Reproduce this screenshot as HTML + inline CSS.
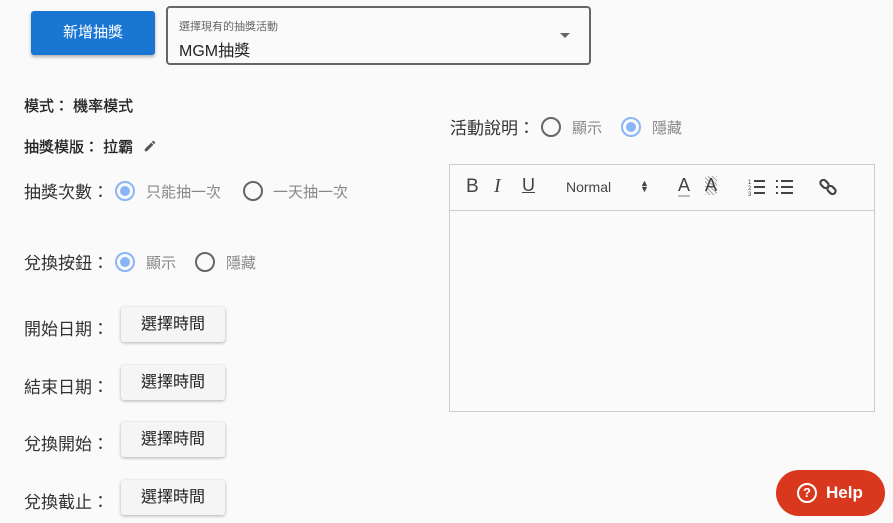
<!DOCTYPE html><html><head><meta charset="utf-8"><style>
body{margin:0;width:893px;height:523px;background:#fafafa;font-family:"Liberation Sans","Noto Sans CJK TC",sans-serif;position:relative;overflow:hidden;color:#222}
.a{position:absolute;white-space:nowrap}
.btn{position:absolute;left:121px;width:104px;height:35px;background:#f5f5f5;border-radius:3px;box-shadow:0 1px 3px rgba(0,0,0,.3);font-size:16px;line-height:35px;text-align:center;color:#222}
.lab{font-size:17px;color:#333}
.r{position:absolute;width:20px;height:20px;border:2px solid #666;border-radius:50%;box-sizing:border-box}
.r.on{border-color:#8ab4f8}
.r.on::after{content:"";position:absolute;left:3px;top:3px;width:10px;height:10px;border-radius:50%;background:#8ab4f8}
.o{position:absolute;color:#888;font-size:15px;white-space:nowrap}
</style></head><body>
<div class="a" style="left:31px;top:11px;width:124px;height:44px;background:#1976d2;border-radius:3px;box-shadow:0 2px 3px rgba(0,0,0,.3);color:#fff;font-size:15px;line-height:44px;text-align:center">新增抽獎</div>
<div class="a" style="left:166px;top:6px;width:421px;height:55px;border:2px solid #666;border-radius:4px"></div>
<div class="a" style="left:179px;top:18px;font-size:11px;color:#666">選擇現有的抽獎活動</div>
<div class="a" style="left:179px;top:37px;font-size:16px;color:#222">MGM抽獎</div>
<div class="a" style="left:560px;top:33px;width:0;height:0;border-left:5px solid transparent;border-right:5px solid transparent;border-top:5px solid #666"></div>
<div class="a" style="left:24px;top:95px;font-size:15px;color:#222;-webkit-text-stroke:0.3px #222">模式： 機率模式</div>
<div class="a" style="left:24px;top:136px;font-size:15px;color:#222;-webkit-text-stroke:0.3px #222">抽獎模版： 拉霸 <svg width="14" height="14" viewBox="0 0 24 24" style="vertical-align:-1px;margin-left:6px"><path fill="#555" d="M3 17.25V21h3.75L17.8 9.94l-3.75-3.75L3 17.25zM20.7 7.04a1 1 0 000-1.41l-2.34-2.34a1 1 0 00-1.41 0l-1.83 1.83 3.75 3.75 1.83-1.83z"/></svg></div>

<div class="a lab" style="left:24px;top:178px">抽獎次數：</div>
<span class="r on" style="left:115px;top:181px"></span><span class="o" style="left:146px;top:181px">只能抽一次</span>
<span class="r" style="left:243px;top:181px"></span><span class="o" style="left:273px;top:181px">一天抽一次</span>

<div class="a lab" style="left:24px;top:249px">兌換按鈕：</div>
<span class="r on" style="left:115px;top:252px"></span><span class="o" style="left:146px;top:252px">顯示</span>
<span class="r" style="left:195px;top:252px"></span><span class="o" style="left:226px;top:252px">隱藏</span>

<div class="a lab" style="left:24px;top:315px">開始日期：</div><div class="btn" style="top:307px">選擇時間</div>
<div class="a lab" style="left:24px;top:373px">結束日期：</div><div class="btn" style="top:365px">選擇時間</div>
<div class="a lab" style="left:24px;top:430px">兌換開始：</div><div class="btn" style="top:422px">選擇時間</div>
<div class="a lab" style="left:24px;top:488px">兌換截止：</div><div class="btn" style="top:480px">選擇時間</div>

<div class="a lab" style="left:450px;top:114px">活動說明：</div>
<span class="r" style="left:541px;top:117px"></span><span class="o" style="left:572px;top:117px">顯示</span>
<span class="r on" style="left:621px;top:117px"></span><span class="o" style="left:652px;top:117px">隱藏</span>

<div class="a" style="left:449px;top:164px;width:424px;height:246px;border:1px solid #ccc"></div>
<div class="a" style="left:450px;top:210px;width:424px;height:1px;background:#ccc"></div>
<div class="a" style="left:466px;top:176px;font-size:19px;color:#444">B</div>
<div class="a" style="left:494px;top:175px;font-size:20px;color:#444;font-style:italic;font-family:'Liberation Serif',serif">I</div>
<div class="a" style="left:522px;top:175px;font-size:18px;color:#444;text-decoration:underline">U</div>
<div class="a" style="left:566px;top:179px;font-size:14px;color:#444">Normal</div>
<div class="a" style="left:640px;top:180px;font-size:9px;color:#444;line-height:6px">▲<br>▼</div>
<div class="a" style="left:678px;top:176px;font-size:18px;color:#444;border-bottom:2px solid #bbb;line-height:19px">A</div>
<div class="a" style="left:705px;top:176px;font-size:18px;color:#444;line-height:19px;background:repeating-linear-gradient(45deg,#aaa 0 1px,transparent 1px 3px)">A</div>
<svg class="a" style="left:747px;top:178px" width="20" height="18" viewBox="0 0 20 18"><g stroke="#444" stroke-width="2"><line x1="7" y1="3" x2="18" y2="3"/><line x1="7" y1="9" x2="18" y2="9"/><line x1="7" y1="15" x2="18" y2="15"/></g><text x="1" y="6" font-size="6" fill="#444">1</text><text x="1" y="12" font-size="6" fill="#444">2</text><text x="1" y="18" font-size="6" fill="#444">3</text></svg>
<svg class="a" style="left:775px;top:178px" width="20" height="18" viewBox="0 0 20 18"><g stroke="#444" stroke-width="2"><line x1="6" y1="3" x2="18" y2="3"/><line x1="6" y1="9" x2="18" y2="9"/><line x1="6" y1="15" x2="18" y2="15"/><line x1="1" y1="3" x2="3" y2="3"/><line x1="1" y1="9" x2="3" y2="9"/><line x1="1" y1="15" x2="3" y2="15"/></g></svg>
<svg class="a" style="left:819px;top:178px" width="18" height="18" viewBox="0 0 18 18"><g fill="none" stroke="#444" stroke-width="2.2"><rect x="1" y="3" width="9" height="6" rx="3" transform="rotate(45 5.5 6)"/><rect x="8" y="9" width="9" height="6" rx="3" transform="rotate(45 12.5 12)"/></g></svg>
<div class="a" style="left:776px;top:470px;width:109px;height:46px;border-radius:23px;background:#d9381e;color:#fff;font-size:17px;font-weight:bold;line-height:46px"><span style="position:absolute;left:21px;top:13px;width:16px;height:16px;border:2px solid #fff;border-radius:50%;font-size:13px;line-height:16px;text-align:center">?</span><span style="position:absolute;left:50px">Help</span></div>
</body></html>
